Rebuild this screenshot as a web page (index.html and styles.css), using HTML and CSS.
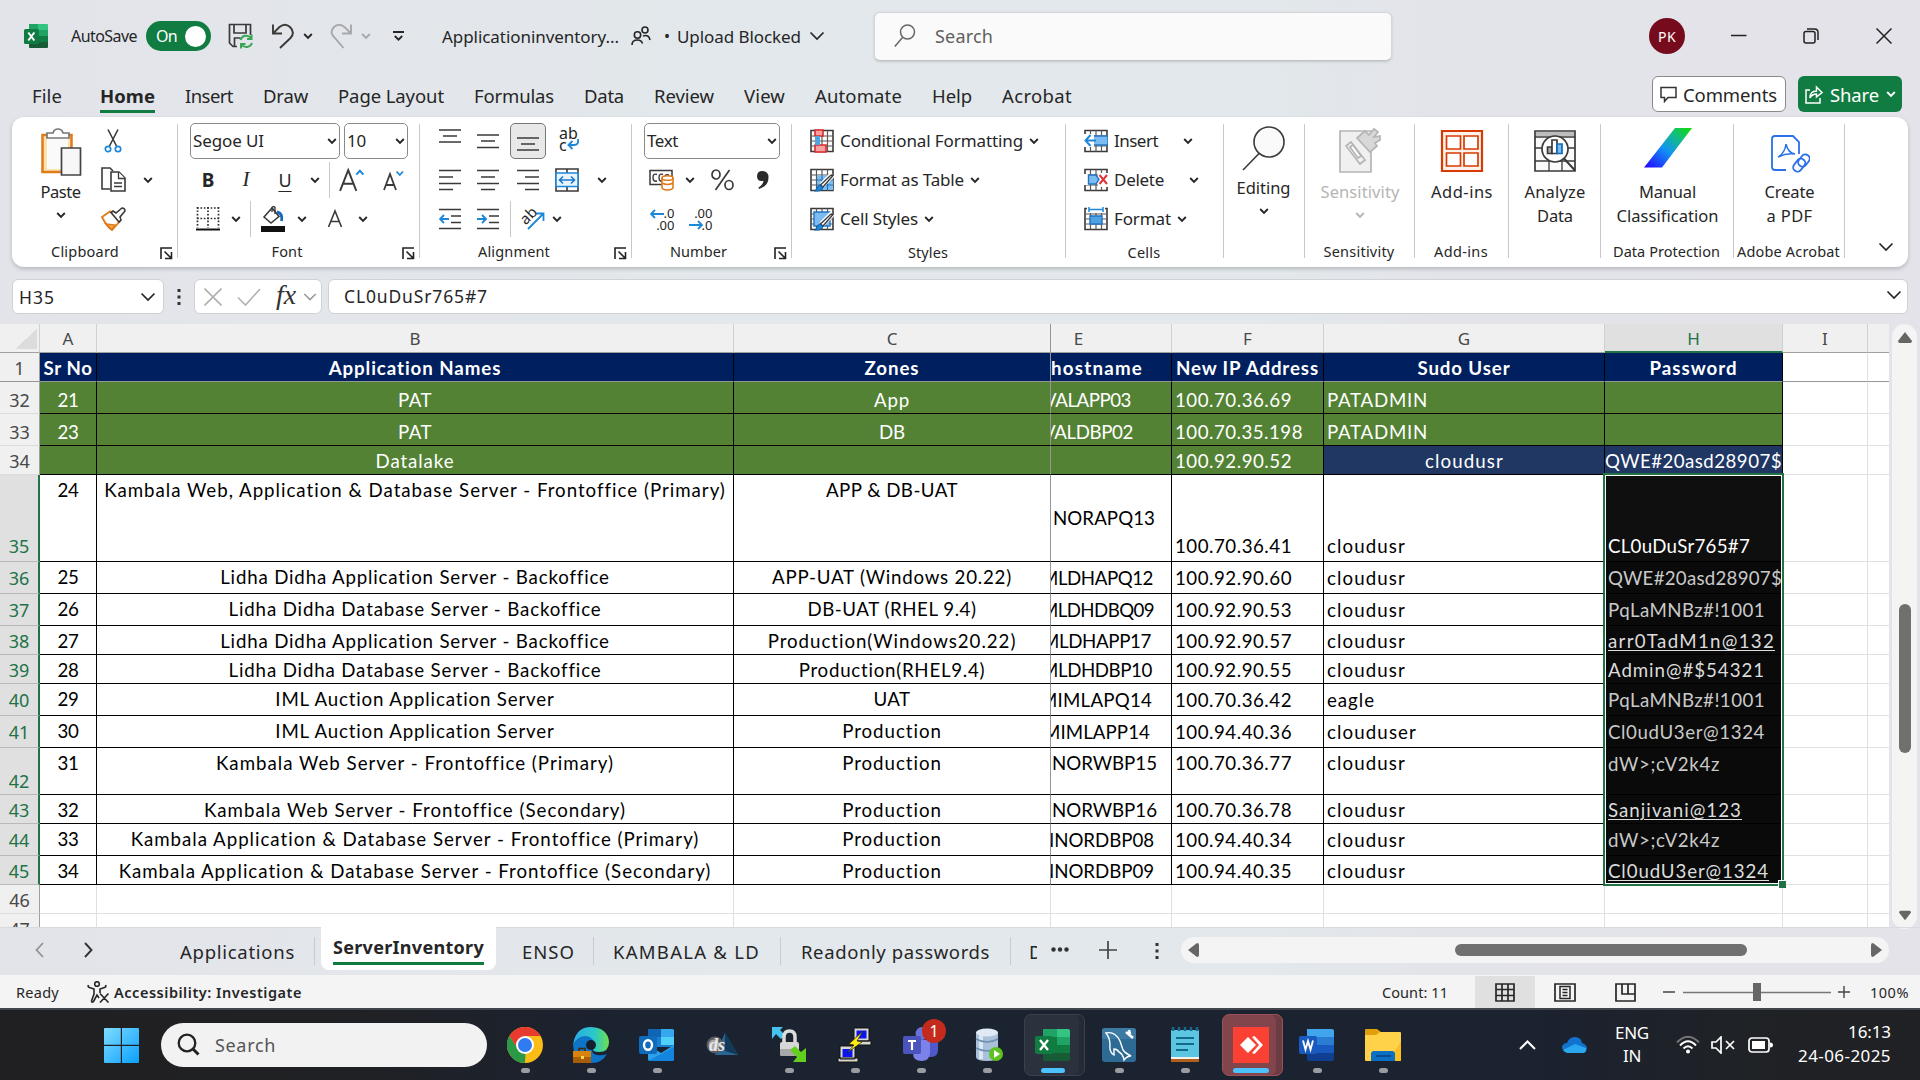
FILE: index.html
```
<!DOCTYPE html>
<html lang="en">
<head>
<meta charset="utf-8">
<title>Applicationinventory - Excel</title>
<link rel="stylesheet" href="styles.css">
</head>
<body>
<svg class="defs" aria-hidden="true">
  <defs>
    <symbol id="chev" viewBox="0 0 10 8"><path d="M1.2 2 5 5.8 8.8 2" fill="none" stroke="currentColor" stroke-width="1.9"/></symbol>
    <symbol id="chevL" viewBox="0 0 16 10"><path d="M1.5 1.5 8 8 14.500 1.500" fill="none" stroke="currentColor" stroke-width="1.7"/></symbol>
    <symbol id="launch" viewBox="0 0 13 13"><path d="M1 12V1h11M4.500 4.500 11 11M11.500 5v6.500H5" fill="none" stroke="#222" stroke-width="1.6"/></symbol>
    <symbol id="tbl" viewBox="0 0 24 24"><path d="M1 1.500h22v21H1z" fill="#fff" stroke="#3b3a39" stroke-width="1.6"/><path d="M1 7h22M1 12h22M1 17h22M6.500 1.500v21M12 1.500v21M17.500 1.500v21" stroke="#5a5958" stroke-width="1.200"/></symbol>
    <symbol id="brush" viewBox="0 0 24 24"><path d="M22.500 6.500 12 17" stroke="#fff" stroke-width="6"/><path d="M23 7.500 13 19l-2.500-2L20.500 7.500q1.500-1 2.500 0z" fill="#fff" stroke="#3b3a39" stroke-width="1.300"/><path d="M10 17.500q3 .5 2.500 3-1 3-8 2.500 2-1 2.500-3 .5-2.500 3-2.500z" fill="#1e88d8" stroke="#0f5ca8"/></symbol>
  </defs>
</svg>

<div class="app">
<header class="title">
  <svg class="xl" width="24" height="24" viewBox="0 0 24 24"><path d="M5 0h9v6H5z" fill="#21a366"/><path d="M14 0h9q1 0 1 1v5H14z" fill="#33c481"/><path d="M5 6h9v12H5z" fill="#107c41"/><path d="M14 6h10v6H14z" fill="#21a366"/><path d="M14 12h10v6H14z" fill="#107c41"/><path d="M5 18h19v5q0 1-1 1H6q-1 0-1-1z" fill="#185c37"/><rect y="5" width="15" height="15" rx="1.500" fill="#107c41"/><path d="m4.300 8.500 6 8m0-8-6 8" stroke="#fff" stroke-width="2"/></svg>
  <span class="t-auto" data-w="66">AutoSave</span>
  <span class="toggle"><span data-w="21">On</span><i></i></span>
  <svg class="t-save" width="26" height="26" viewBox="0 0 26 26"><path d="M9 23.500H5L1.500 20V1.500h21V12M6 1.500V10h12V1.500M6.500 23v-8h6" fill="none" stroke="#3b3a39" stroke-width="1.700"/><path d="M12.500 17a6 6 0 0 1 10.500-2M23.500 11.500V16H19M24 20a6 6 0 0 1-10.500 1.500M13 25.500V21h4.500" fill="none" stroke="#3aa655" stroke-width="2"/></svg>
  <svg class="t-undo" width="24" height="26" viewBox="0 0 24 26"><path d="M2 1.500V10.500h9M2.500 10 8.500 4Q14-.5 19 4q5.500 5.500.5 11L9 25" fill="none" stroke="#3b3a39" stroke-width="1.900"/></svg>
  <svg class="t-c1" width="10" height="8"><use href="#chev"/></svg>
  <svg class="t-redo" width="24" height="26" viewBox="0 0 24 26"><path d="M21 1.500V10.500h-9M20.500 10 14.500 4Q9-.5 4 4q-5 5.500 0 10l9.500 11" fill="none" stroke="#a6a8ab" stroke-width="1.900"/></svg>
  <svg class="t-c2" width="10" height="8"><use href="#chev"/></svg>
  <svg class="t-c3" width="11" height="11" viewBox="0 0 11 11"><path d="M0 1h11M1.800 5l3.700 3.700L9.200 5" fill="none" stroke="#262626" stroke-width="1.900"/></svg>
  <span class="t-name" data-w="177">Applicationinventory...</span>
  <svg class="t-ppl" width="20" height="20" viewBox="0 0 20 20" fill="none" stroke="#262626" stroke-width="1.600"><circle cx="6.500" cy="9" r="3.200"/><path d="M1 19q0-5 5.500-5 4 0 5 3.500"/><circle cx="14" cy="4" r="3"/><path d="M12 10q6-2 7 4"/></svg>
  <span class="t-dot">•</span>
  <span class="t-up" data-w="124">Upload Blocked</span>
  <svg class="t-c4" width="16" height="10"><use href="#chevL"/></svg>
  <div class="search">
    <svg width="22" height="24" viewBox="0 0 22 24" fill="none" stroke="#666" stroke-width="1.500"><circle cx="13.500" cy="8" r="7"/><path d="M8.500 13.500.8 22.500"/></svg>
    <span data-w="58">Search</span>
  </div>
  <span class="avatar"><span data-w="18">PK</span></span>
  <svg class="t-min" width="16" height="16" viewBox="0 0 16 16"><path d="M0 7.500h15.500" stroke="#222" stroke-width="1.500"/></svg>
  <svg class="t-res" width="16" height="16" viewBox="0 0 16 16" fill="none" stroke="#222" stroke-width="1.500"><rect x="1" y="3.500" width="11" height="11.500" rx="2"/><path d="M4 1h7.500q3.500 0 3.500 3.500V12"/></svg>
  <svg class="t-cls" width="16" height="16" viewBox="0 0 16 16"><path d="m.5.5 15 15m0-15-15 15" stroke="#222" stroke-width="1.500"/></svg>
</header>

<nav class="tabs">
  <span data-w="30">File</span><span class="on" data-w="55">Home</span><span data-w="48">Insert</span><span data-w="45">Draw</span><span data-w="106">Page Layout</span><span data-w="80">Formulas</span><span data-w="40">Data</span><span data-w="60">Review</span><span data-w="41">View</span><span data-w="87">Automate</span><span data-w="40">Help</span><span data-w="70">Acrobat</span>
  <button class="btn comm"><svg width="17" height="17" viewBox="0 0 17 17"><path d="M1 1.500h15v10H8L4.500 15.500V11.500H1z" fill="none" stroke="#333" stroke-width="1.500"/></svg><span data-w="94">Comments</span></button>
  <button class="btn share"><svg width="18" height="19" viewBox="0 0 18 19" fill="none" stroke="#fff" stroke-width="1.500"><path d="M5 5H1v13h14v-5"/><path d="M5 13q0-7 6.500-7V2L17 7.500 11.500 12V9Q7 9 5 13z"/></svg><span data-w="49">Share</span><svg width="10" height="8"><use href="#chev"/></svg></button>
</nav>

<section class="ribbon">
  <div class="grp g-clip">
    <div class="cols">
      <div class="big paste">
        <svg width="44" height="48" viewBox="0 0 44 48"><path d="M3.500 7h29v37h-29z" fill="#fbe3b0" stroke="#e07b1a" stroke-width="2.500"/><path d="M8 10h21v31H8z" fill="#fafafa"/><path d="M8 10V5h6q1-4 5-4t5 4h6v5z" fill="#fff" stroke="#777" stroke-width="1.700"/><path d="M22.500 20h19v27h-19z" fill="#f7f7f7" stroke="#444" stroke-width="1.700"/></svg>
        <b data-w="40">Paste</b><svg class="bc" width="10" height="8"><use href="#chev"/></svg>
      </div>
      <div class="rows">
        <div class="row"><i class="c w28"><svg width="18" height="24" viewBox="0 0 18 24"><path d="M4 .5 12.500 17M14 .5 5.500 17" stroke="#3b3a39" stroke-width="1.600"/><circle cx="4" cy="20" r="2.700" fill="none" stroke="#1e88d8" stroke-width="1.700"/><circle cx="14" cy="20" r="2.700" fill="none" stroke="#1e88d8" stroke-width="1.700"/></svg></i></div>
        <div class="row"><i class="c w28"><svg width="25" height="25" viewBox="0 0 25 25" fill="#fff" stroke="#3b3a39" stroke-width="1.600"><path d="M9 22H1V1h8l3 3"/><path d="M10 5h8l6 6v13H10z"/><path d="M17.500 5v6.500H24M13 16h8M13 19.500h8" stroke-width="1.300"/></svg></i><i class="c w42"><svg width="10" height="8"><use href="#chev"/></svg></i></div>
        <div class="row"><i class="c w28"><svg width="25" height="24" viewBox="0 0 25 24"><path d="M1 10 9 4.500 19 14l-8 9Q6 20 1 10z" fill="#fff" stroke="#e07b1a" stroke-width="1.800"/><path d="M5 17l9 1-3 4.500z" fill="#f3b14e" stroke="#e07b1a" stroke-width="1.500"/><path d="M10 5.500 12 4l3 2 6-5q3 0 3 3l-5 6 1 3-2 2z" fill="#fff" stroke="#3b3a39" stroke-width="1.600"/></svg></i></div>
      </div>
    </div>
    <footer><span data-w="68">Clipboard</span><svg width="13" height="13"><use href="#launch"/></svg></footer>
  </div>

  <div class="grp g-font">
    <div class="rows">
      <div class="row p12"><div class="combo w150"><span data-w="71">Segoe UI</span><svg width="10" height="8"><use href="#chev"/></svg></div><div class="combo w64 g4"><span data-w="19">10</span><svg width="10" height="8"><use href="#chev"/></svg></div></div>
      <div class="row p11"><i class="c w38"><strong>B</strong></i><i class="c w38"><em>I</em></i><i class="c w40"><u>U</u></i><i class="c w20"><svg width="10" height="8"><use href="#chev"/></svg></i><i class="div g4"></i>
        <i class="c w44"><svg width="26" height="26" viewBox="0 0 24 24" fill="none"><path d="M1 22 8.500 3 16 22M3.500 15.500h10" stroke="#3b3a39" stroke-width="1.800"/><path d="m16 7 3.300-3.500L22.500 7" stroke="#1e88d8" stroke-width="1.800"/></svg></i><i class="c w38"><svg width="22" height="24" viewBox="0 0 22 24" fill="none"><path d="M2 22 8 6l6 16M4 17h8" stroke="#3b3a39" stroke-width="1.800"/><path d="m14.500 3.500 3.300 3.500L21 3.500" stroke="#1e88d8" stroke-width="1.800"/></svg></i></div>
      <div class="row p12"><i class="c w36"><svg width="24" height="24" viewBox="0 0 24 24"><path d="M1 1h22M1 11.500h22" stroke="#333" stroke-width="1.700" stroke-dasharray="1.700 1.700"/><path d="M1.500 0v21M12 0v21M22.500 0v21" stroke="#333" stroke-width="1.700" stroke-dasharray="1.700 1.700"/><path d="M0 22.500h24" stroke="#111" stroke-width="2"/></svg></i><i class="c w20"><svg width="10" height="8"><use href="#chev"/></svg></i><i class="div g4"></i>
        <i class="c w44"><svg width="26" height="26" viewBox="0 0 26 26"><path d="m4 11 8-9 7 8.500L11 17z" fill="#fff" stroke="#3b3a39" stroke-width="1.600"/><path d="M12 6V1.500q2-2 3 0V8" fill="none" stroke="#3b3a39" stroke-width="1.400"/><path d="M17 6q6 1 4.500 9" fill="none" stroke="#1668b8" stroke-width="2.800"/><path d="M1 20h24v6H1z" fill="#111"/></svg></i><i class="c w14"><svg width="10" height="8"><use href="#chev"/></svg></i><i class="c w52"><svg width="16" height="20" viewBox="0 0 16 18"><path d="M1.500 17 8 1l6.500 16M4 11.500h8" fill="none" stroke="#3b3a39" stroke-width="1.600"/></svg></i><i class="c w4"><svg width="10" height="8"><use href="#chev"/></svg></i></div>
    </div>
    <footer><span data-w="31">Font</span><svg width="13" height="13"><use href="#launch"/></svg></footer>
  </div>

  <div class="grp g-align">
    <div class="rows">
      <div class="row p11"><i class="c w38"><svg class="ln up" width="22" height="22" viewBox="0 0 22 22"><path d="M0 3h22M4 9h14M0 15h22"/></svg></i><i class="c w38"><svg class="ln" width="22" height="22" viewBox="0 0 22 22"><path d="M0 5h22M4 11h14M0 17.500h22"/></svg></i><i class="c w36 g3 pressed"><svg class="ln" width="22" height="22" viewBox="0 0 22 22"><path d="M0 8h22M4 14h14M0 20h22"/></svg></i><i class="c w46 wrap"><span>ab<br>c</span><svg width="12" height="12" viewBox="0 0 12 12"><path d="M11 0q1 6-4 6H1.500M5.500 2 1.500 6l4 4" fill="none" stroke="#1e88d8" stroke-width="1.900"/></svg></i></div>
      <div class="row p11"><i class="c w38"><svg class="ln" width="22" height="22" viewBox="0 0 22 22"><path d="M0 1.500h22M0 8h14M0 14.500h22M0 20.500h14"/></svg></i><i class="c w38"><svg class="ln" width="22" height="22" viewBox="0 0 22 22"><path d="M0 1.500h22M4 8h14M0 14.500h22M4 20.500h14"/></svg></i><i class="c w36 g3"><svg class="ln" width="22" height="22" viewBox="0 0 22 22"><path d="M0 1.500h22M8 8h14M0 14.500h22M8 20.500h14"/></svg></i><i class="c w42"><svg width="24" height="24" viewBox="0 0 24 24" fill="none"><path d="M1 1h22v22H1zM12 1v4m0 14v4" stroke="#3b3a39" stroke-width="1.600"/><path d="M1 5h22v13.500H1z" fill="#eaf4fc" stroke="#1e88d8" stroke-width="1.600"/><path d="M4.500 12h15M8 8.500 4.500 12 8 15.500m8-7 3.500 3.500-3.500 3.500" stroke="#1e78c8" stroke-width="1.600"/></svg></i><i class="c w28"><svg width="10" height="8"><use href="#chev"/></svg></i></div>
      <div class="row p11"><i class="c w38"><svg class="ln" width="22" height="22" viewBox="0 0 22 22"><path d="M0 1.500h22M12 8h10M12 14.500h10M0 20.500h22"/><path class="bl" d="M1 11h9M5 7l-4 4 4 4"/></svg></i><i class="c w38"><svg class="ln" width="22" height="22" viewBox="0 0 22 22"><path d="M0 1.500h22M12 8h10M12 14.500h10M0 20.500h22"/><path class="bl" d="M0 11h9M5 7l4 4-4 4"/></svg></i><i class="div g3"></i><i class="c w42"><span class="ori">ab</span><svg class="orr" width="18" height="18" viewBox="0 0 18 18"><path d="M1 17 16 2M9 1.500h7.500V9" fill="none" stroke="#1e88d8" stroke-width="1.800"/></svg></i><i class="c w8"><svg width="10" height="8"><use href="#chev"/></svg></i></div>
    </div>
    <footer><span data-w="72">Alignment</span><svg width="13" height="13"><use href="#launch"/></svg></footer>
  </div>

  <div class="grp g-num">
    <div class="rows">
      <div class="row p12"><div class="combo w136"><span data-w="31">Text</span><svg width="10" height="8"><use href="#chev"/></svg></div></div>
      <div class="row p12"><i class="c w36"><svg width="26" height="22" viewBox="0 0 26 22"><path d="M1 1.500h22v14H1z" fill="none" stroke="#3b3a39" stroke-width="1.500"/><path d="M8 5.500Q4 4 4 8.500T8 12M14 5.500q-4-1.500-4 3T14 12M16 12V8q0-3 4-2" fill="none" stroke="#3b3a39" stroke-width="1.400"/><path d="M13 9h11v9q0 3-5.500 3T13 18z" fill="#fff" stroke="#e07b1a" stroke-width="1.600"/><ellipse cx="18.500" cy="9" rx="5.500" ry="2.300" fill="#fff" stroke="#e07b1a" stroke-width="1.600"/><path d="M13 14q5.500 3 11 0" fill="none" stroke="#e07b1a" stroke-width="1.600"/></svg></i><i class="c w20"><svg width="10" height="8"><use href="#chev"/></svg></i><i class="c w44"><svg width="23" height="22" viewBox="0 0 23 22" fill="none" stroke="#3b3a39" stroke-width="1.700"><ellipse cx="5" cy="5.500" rx="4" ry="4.500"/><ellipse cx="18" cy="16" rx="4" ry="4.500"/><path d="M18.500 1 4.500 21"/></svg></i><i class="c w38"><svg width="12" height="18" viewBox="0 0 12 18"><path d="M5.500 0Q11.500 0 11.500 6.500 11.500 15 2 18l-.5-1.500Q6 14 6.500 9.800 0 11 0 5.200 0 0 5.500 0z" fill="#2b2b2b"/></svg></i></div>
      <div class="row p12"><i class="c w36 dec"><span>&nbsp;&nbsp;.0<br>.00</span><svg class="dl" width="14" height="10" viewBox="0 0 14 10"><path d="M14 5H1M5 1 1 5l4 4"/></svg></i><i class="c w36 g2 dec"><span>.00<br>&nbsp;&nbsp;.0</span><svg class="dr" width="14" height="10" viewBox="0 0 14 10"><path d="M0 5h13M9 1l4 4-4 4"/></svg></i></div>
    </div>
    <footer><span data-w="57">Number</span><svg width="13" height="13"><use href="#launch"/></svg></footer>
  </div>

  <div class="grp g-sty">
    <div class="rows">
      <div class="row p18"><svg width="24" height="24" viewBox="0 0 24 24"><use href="#tbl"/><path d="M5 1h8v6H5zM5 16h11v7H5z" fill="#f9a0a0" stroke="#d92a2a" stroke-width="1.600"/><path d="M5 7h5v9H5z" fill="#4fa3e3"/></svg><span class="lb" data-w="183">Conditional Formatting</span><svg class="g6" width="10" height="8"><use href="#chev"/></svg></div>
      <div class="row p18"><svg width="24" height="24" viewBox="0 0 24 24"><use href="#tbl"/><path d="M7 7.500h16V22H7z" fill="#7cbcf0"/><path d="M7 12h16M7 17h16M12 7.500V22M17.500 7.500V22" stroke="#2474c0" stroke-width="1.200"/><use href="#brush"/></svg><span class="lb" data-w="124">Format as Table</span><svg class="g6" width="10" height="8"><use href="#chev"/></svg></div>
      <div class="row p18"><svg width="24" height="24" viewBox="0 0 24 24"><use href="#tbl"/><path d="M4 5h16v14H4z" fill="#7cbcf0" stroke="#2474c0" stroke-width="1.400"/><use href="#brush"/></svg><span class="lb" data-w="78">Cell Styles</span><svg class="g6" width="10" height="8"><use href="#chev"/></svg></div>
    </div>
    <footer class="lo"><span data-w="40">Styles</span></footer>
  </div>

  <div class="grp g-cells">
    <div class="rows">
      <div class="row p18"><svg width="24" height="24" viewBox="0 0 24 24"><use href="#tbl"/><path d="M8 7h16v9H8z" fill="#7cbcf0" stroke="#2474c0" stroke-width="1.400"/><path d="M0 5h10v13H0z" fill="#fff"/><path d="M12 11.500H1.500M6.500 6l-5 5.500 5 5.500" fill="none" stroke="#1e88d8" stroke-width="2"/></svg><span class="lb" data-w="44">Insert</span><svg class="g25" width="10" height="8"><use href="#chev"/></svg></div>
      <div class="row p18"><svg width="24" height="24" viewBox="0 0 24 24"><use href="#tbl"/><path d="M0 6h5v11H0zM14 5h10v14H14z" fill="#fff"/><path d="M4.500 7H12l3 4.500-3 4.500H4.500z" fill="#7cbcf0" stroke="#2474c0" stroke-width="1.400"/><path d="m15.500 7 7.500 9m0-9-7.500 9" stroke="#e03535" stroke-width="2"/></svg><span class="lb" data-w="50">Delete</span><svg class="g25" width="10" height="8"><use href="#chev"/></svg></div>
      <div class="row p18"><svg width="24" height="24" viewBox="0 0 24 24"><use href="#tbl"/><path d="M3 0h18v6H3z" fill="#fff"/><path d="M6 9h12v8H6z" fill="#4fa3e3" stroke="#2474c0" stroke-width="1.400"/><path d="M5 2.500h14M5 0v5M19 0v5" stroke="#1e88d8" stroke-width="1.500"/></svg><span class="lb" data-w="57">Format</span><svg class="g6" width="10" height="8"><use href="#chev"/></svg></div>
    </div>
    <footer class="lo"><span data-w="33">Cells</span></footer>
  </div>

  <div class="grp g-edit"><div class="big"><svg width="44" height="46" viewBox="0 0 44 46" fill="none" stroke="#3b3a39" stroke-width="1.600"><circle cx="27" cy="16" r="15" fill="#fafafa"/><path d="M17 27.500 1 44"/></svg><b data-w="54">Editing</b><svg class="bc" width="10" height="8"><use href="#chev"/></svg></div></div>
  <div class="grp g-sens"><div class="big dim"><svg width="44" height="46" viewBox="0 0 44 46" fill="#f0f0f0" stroke="#b5b5b5" stroke-width="1.700"><path d="M2 4h31v41H2z"/><path d="M8 19l5-4 14 18-5 4z" /><path d="m12 20 3-2 8 11-3 2z" fill="#fff"/><path d="M19 11 27 4l4 4 5-6 4 3-4 5 6-1v4l-5 3 2 3-7 6z" fill="#d8d8d8"/></svg><b data-w="79">Sensitivity</b><svg class="bc" width="10" height="8"><use href="#chev"/></svg></div><footer class="lo"><span data-w="71">Sensitivity</span></footer></div>
  <div class="grp g-add"><div class="big"><svg width="44" height="46" viewBox="0 0 44 46" fill="none" stroke="#d83b01"><path d="M2 4h40v40H2z" stroke-width="2.200" fill="#fdf1ec"/><path d="M6.500 9h14v13h-14zM24 9h14v13H24zM6.500 26h14v13h-14zM24 26h14v13H24z" stroke-width="1.700" fill="#fff"/></svg><b data-w="62">Add-ins</b></div><footer class="lo"><span data-w="54">Add-ins</span></footer></div>
  <div class="grp g-ana"><div class="big"><svg width="44" height="46" viewBox="0 0 44 46" fill="none" stroke="#3b3a39" stroke-width="1.700"><path d="M2 4h40v40H2z" fill="#fafafa"/><path d="M3 5h38v4H3z" fill="#bdbdbd" stroke="none"/><path d="M2 10h40M2 21h40M2 34h40M16 34v10M29 34v10" stroke-width="1.300"/><circle cx="22" cy="22" r="13" fill="#fff"/><path d="M14.500 20h4.500v6.500h-4.500z" fill="#aaa"/><path d="M19 13h5v13.500h-5z" fill="#fff"/><path d="M24 17h5v9.500h-5z" fill="#7cbcf0" stroke="#1668b8"/><path d="m31 31.500 11 12" stroke-width="2"/></svg><b data-w="61">Analyze</b><b data-w="36">Data</b></div></div>
  <div class="grp g-man"><div class="big"><svg width="48" height="46" viewBox="0 0 48 46"><defs><linearGradient id="lg" x1="0" y1="1" x2="1" y2="0"><stop offset="0" stop-color="#2400ff"/><stop offset=".45" stop-color="#1293f5"/><stop offset=".75" stop-color="#12bf7a"/><stop offset="1" stop-color="#12dc00"/></linearGradient></defs><path d="M0 40.500h18L48 1H31z" fill="url(#lg)"/></svg><b data-w="57">Manual</b><b data-w="102">Classification</b></div><footer class="lo"><span data-w="107">Data Protection</span></footer></div>
  <div class="grp g-pdf"><div class="big"><svg width="40" height="46" viewBox="0 -2 40 46" fill="none" stroke="#2a70e8" stroke-width="1.800"><path d="M16 41H5q-3 0-3-3V10q0-3 3-3h18l6 6v12"/><path d="M8 28q7-4 8-13M16 15q2 9 9 10-9-1-17 3" stroke-width="1.500"/><rect x="25" y="29" width="8.500" height="14" rx="4" transform="rotate(38 29 36)"/><rect x="30" y="25" width="8.500" height="13" rx="4" transform="rotate(38 34 31)" /></svg><b data-w="50">Create</b><b data-w="46">a PDF</b></div><footer class="lo"><span data-w="103">Adobe Acrobat</span></footer></div>
  <div class="g-end"><svg width="16" height="10"><use href="#chevL"/></svg></div>
</section>

<div class="fbar">
  <div class="fb name"><span data-w="36">H35</span><svg width="16" height="10"><use href="#chevL"/></svg></div>
  <svg class="dots" width="4" height="16" viewBox="0 0 4 16" fill="#333"><path d="M.5 0h3v3h-3zM.5 6.500h3v3h-3zM.5 13h3v3h-3z"/></svg>
  <div class="fb fx"><svg width="18" height="18" viewBox="0 0 18 18"><path d="m.5.5 17 17m0-17-17 17" stroke="#b0b0b0" stroke-width="1.600"/></svg><svg width="24" height="18" viewBox="0 0 24 18"><path d="M1 9.500 8.500 17 23 1" fill="none" stroke="#b0b0b0" stroke-width="1.600"/></svg><em>fx</em><svg class="gr" width="14" height="10" viewBox="0 0 16 10"><use href="#chevL"/></svg></div>
  <div class="fb val"><span data-w="144">CL0uDuSr765#7</span><svg width="16" height="10"><use href="#chevL"/></svg></div>
</div>

<main class="sheet">
  <div class="grid" id="grid"></div>
  <div class="vs"><svg width="14" height="11" viewBox="0 0 14 11"><path d="M7 0 14 9q0 2-2 2H2q-2 0-2-2z"/></svg><i></i><svg width="12" height="11" viewBox="0 0 14 11"><path d="M7 11 0 2Q0 0 2 0h10q2 0 2 2z"/></svg></div>
</main>

<div class="sheets">
  <svg class="s-l" width="9" height="16" viewBox="0 0 9 16"><path d="M8 1 1.500 8 8 15" fill="none" stroke="#909090" stroke-width="1.700"/></svg>
  <svg class="s-r" width="9" height="16" viewBox="0 0 9 16"><path d="m1 1 6.500 7L1 15" fill="none" stroke="#333" stroke-width="1.900"/></svg>
  <span class="s1"><b data-w="115">Applications</b></span><span class="s2"><b data-w="151">ServerInventory</b></span><span class="s3"><b data-w="53">ENSO</b></span><span class="s4"><b data-w="147">KAMBALA &amp; LD</b></span><span class="s5"><b data-w="189">Readonly passwords</b></span><span class="s6"><b>D</b></span>
  <svg class="s-m" width="18" height="5" viewBox="0 0 18 5" fill="#333"><circle cx="2.500" cy="2.500" r="2.200"/><circle cx="9" cy="2.500" r="2.200"/><circle cx="15.500" cy="2.500" r="2.200"/></svg>
  <svg class="s-p" width="18" height="18" viewBox="0 0 18 18"><path d="M9 0v18M0 9h18" stroke="#444" stroke-width="1.700"/></svg>
  <svg class="s-d" width="4" height="16" viewBox="0 0 4 16" fill="#333"><path d="M.5 0h3v3h-3zM.5 6.500h3v3h-3zM.5 13h3v3h-3z"/></svg>
  <div class="hs"><svg width="11" height="14" viewBox="0 0 11 14"><path d="M0 7 9 0q2 0 2 2v10q0 2-2 2z"/></svg><i></i><svg width="11" height="14" viewBox="0 0 11 14"><path d="M11 7 2 0Q0 0 0 2v10q0 2 2 2z"/></svg></div>
</div>

<div class="status">
  <span class="st1" data-w="43">Ready</span>
  <svg class="st2" width="23" height="22" viewBox="0 0 23 22" fill="none" stroke="#262626" stroke-width="1.600"><circle cx="10" cy="3" r="2.300"/><path d="M1.500 4q-1 2 1 2.500L7 8v5L4.500 20q.5 2 2 .5L10 14l2 3M18.500 4q1 2-1 2.500L13 8v4M13 12.500l8.500 9m0-9-8.500 9"/></svg>
  <span class="st3" data-w="188">Accessibility: Investigate</span>
  <span class="st4" data-w="66">Count: 11</span>
  <i class="v on"><svg width="20" height="19" viewBox="0 0 20 19" fill="none" stroke="#262626" stroke-width="1.700"><path d="M1 1h18v17H1zM1 6.500h18M1 12.500h18M7 1v17M13 1v17"/></svg></i>
  <i class="v"><svg width="22" height="19" viewBox="0 0 22 19" fill="none" stroke="#262626" stroke-width="1.700"><path d="M1 1h20v17H1z"/><path d="M6 3.500h10v12H6zM8.500 6.500h5M8.500 9.500h5M8.500 12.500h5" stroke-width="1.500"/></svg></i>
  <i class="v"><svg width="21" height="19" viewBox="0 0 21 19" fill="none" stroke="#262626" stroke-width="1.700"><path d="M1 1h19v17H1zM7 1v10h6V1M13 11h7"/></svg></i>
  <div class="zoom"><svg width="187" height="18" viewBox="0 0 187 18" fill="none" stroke="#444"><path d="M0 9h12M175 9h12M181 3v12" stroke-width="1.400"/><path d="M20 9.500h148" stroke="#777"  stroke-width="1.500"/><path d="M94 0v18" stroke="#666" stroke-width="8"/></svg></div>
  <span class="st5" data-w="39">100%</span>
</div>

<footer class="task">
  <svg class="win" width="35" height="35" viewBox="0 0 35 35"><defs><linearGradient id="w" x1="0" y1="0" x2="1" y2="1"><stop offset="0" stop-color="#7fdcff"/><stop offset="1" stop-color="#0aa0ff"/></linearGradient></defs><path d="M1 0h15.800v16.800H0V1q0-1 1-1zM18 0h16q1 0 1 1v15.800H18zM0 18h16.800v17H1q-1 0-1-1zM18 18h17v16q0 1-1 1H18z" fill="url(#w)"/></svg>
  <div class="ts"><svg width="23" height="23" viewBox="0 0 23 23" fill="none" stroke="#222" stroke-width="2.300"><circle cx="10" cy="10" r="8.300"/><path d="m16 16 5.500 5.500" stroke-width="3"/></svg><span data-w="61">Search</span></div>
  <div class="apps">
    <span><svg viewBox="0 0 36 36"><circle cx="18" cy="18" r="18" fill="#fbbc15"/><path d="M2.400 9A18 18 0 0 1 33.600 9H18L10 21z" fill="#e63b2e"/><path d="M2.400 9 11 22l7.500 5-.5 9A18 18 0 0 1 2.400 9z" fill="#2b9a47"/><circle cx="18" cy="18" r="9" fill="#fff"/><circle cx="18" cy="18" r="7" fill="#2f7bf0"/></svg></span>
    <span><svg viewBox="0 0 36 36"><defs><linearGradient id="e1" x1="0" x2="1"><stop offset="0" stop-color="#2ba9e8"/><stop offset=".6" stop-color="#2cc8c8"/><stop offset="1" stop-color="#6ee04e"/></linearGradient></defs><path d="M1 13Q5 0 18 0q17 1 18 15 0 10-10 10-8 0-6-5 1-10-9-9Q4 11 0 18z" fill="url(#e1)"/><path d="M0 18Q4 9 13 9q8 1 8 9-5 8 3 10 5 1 10-1-5 9-15 9Q1 35 0 18z" fill="#0e74c8"/><circle cx="18" cy="18" r="5" fill="#14202c"/><path d="M0 24h18v12H0z" fill="#d9820c"/><path d="M0 30h18v6H0z" fill="#a85e06"/><path d="M6 24v-2.500h6V24" fill="none" stroke="#412604" stroke-width="1.500"/><path d="M8 29h3v3H8z" fill="#fbd25a"/></svg></span>
    <span><svg viewBox="0 0 36 36"><path d="M9 2h24q2 0 2 2v16H9z" fill="#1b7fd4"/><path d="M9 2h13v8H9z" fill="#1066b5"/><path d="M22 2h11q2 0 2 2v6H22z" fill="#35a8ee"/><path d="M22 10h13v8H22z" fill="#50d0f8"/><path d="M9 18l13 8 13-8v14q0 2-2 2H11q-2 0-2-2z" fill="#2ca0ea"/><path d="M9 34 35 20v12q0 2-2 2z" fill="#1485de"/><rect x="0" y="9" width="18" height="18" rx="2" fill="#0f6cbd"/><ellipse cx="9" cy="18" rx="4" ry="4.800" fill="none" stroke="#fff" stroke-width="2.400"/></svg></span>
    <span class="nodot"><svg viewBox="0 0 36 36"><path d="M20 6 33 28H10z" fill="#2a6596"/><path d="M20 6 33 28 20 24z" fill="#123a58"/><circle cx="10" cy="18" r="8.500" fill="#5c5c5e"/><circle cx="9" cy="18" r="5.500" fill="#a8a8a8"/><text x="4" y="24" font-family="Liberation Serif, serif" font-style="italic" font-weight="700" font-size="18" fill="#e8e8e8">ds</text></svg></span>
    <span><svg viewBox="0 0 36 36"><path d="M1 0h11L9 3l5 5-4 4-5-5-4 5z" fill="#45c3ee"/><path d="M13 17v-7q0-6 5.500-6T24 10v7" fill="none" stroke="#dcdcdc" stroke-width="3.500"/><rect x="9" y="15" width="19" height="14" rx="2" fill="#d6d6d6"/><path d="M9 22h19v5q0 2-2 2H11q-2 0-2-2z" fill="#a8a8a8"/><path d="M19 23l5-4 6 6 5-4v14H22l4-5z" fill="#62cf1e"/></svg></span>
    <span><svg viewBox="0 0 36 36"><g fill="#d8d8d0" stroke="#111"><path d="M17 1h15v13H17zM15 14h19v4H15zM3 19h15v13H3zM1 31h20v4H1z"/></g><path d="M19.500 3.500h10v8h-10zM5.500 22h10v8h-10z" fill="#0a14f0"/><path d="M26 4 12 17l5 1-7 8 15-11-5-1z" fill="#ffee10" stroke="#222" stroke-width=".7"/></svg></span>
    <span><svg viewBox="0 0 36 36"><circle cx="19" cy="6.500" r="6.500" fill="#6a72d8"/><path d="M25 13h10v10q0 7-7 7h-3z" fill="#5059c9"/><path d="M10 13h17v12q0 9-8.500 9T10 26z" fill="#7b83eb"/><rect y="9" width="18" height="18" rx="2" fill="#4b53bc"/><path d="M5 14h8M9 14v9" stroke="#fff" stroke-width="2.200"/></svg><em class="badge">1</em></span>
    <span><svg viewBox="0 0 36 36"><path d="M7 5v25q0 4 11 4t11-4V5z" fill="#a9c1da"/><path d="M10 8v24h4V9z" fill="#dbe7f2"/><path d="M7 12q11 6 22 0M7 21q11 6 22 0" fill="none" stroke="#6f8fb0" stroke-width="1.500"/><ellipse cx="18" cy="5.500" rx="11" ry="4" fill="#dfeaf4"/><circle cx="27" cy="27" r="7" fill="#5cc21e"/><path d="m25 23 6 4-6 4z" fill="#fff"/></svg></span>
    <span class="act"><svg viewBox="0 0 36 36"><path d="M8 2h14v8H8z" fill="#21a366"/><path d="M22 2h11q2 0 2 2v6H22z" fill="#33c481"/><path d="M8 10h14v16H8z" fill="#107c41"/><path d="M22 10h13v8H22z" fill="#21a366"/><path d="M22 18h13v8H22z" fill="#107c41"/><path d="M8 26h27v6q0 2-2 2H10q-2 0-2-2z" fill="#185c37"/><rect y="9" width="18" height="18" rx="2" fill="#107c41"/><path d="m5 13 8 10m0-10L5 23" stroke="#fff" stroke-width="2.300"/></svg></span>
    <span><svg viewBox="0 0 36 36"><rect x="1" y="1" width="34" height="34" rx="3" fill="#2e6b94"/><path d="M1 4q0-3 3-3h28q3 0 3 3v8H1z" fill="#3d7ba5"/><path d="M5 6q9-2 14 8 2 6 3 9 2 3 8 6-4 0-7 4-1-6-5-8-2-3-5-3v6q-5-3-4-10Q9 11 5 6z" fill="none" stroke="#fff" stroke-width="1.400"/><path d="m25 5 7 6m-4-8 1 4" stroke="#fff" stroke-width="2.500"/></svg></span>
    <span><svg viewBox="0 0 36 36"><path d="M4 3h28v28H4z" fill="#5cc6e2"/><path d="M4 30h28v2H4z" fill="#f2f2f2"/><path d="M4 32h28v3H4z" fill="#b0601a"/><path d="M6 0v4M12 0v4M18 0v4M24 0v4M30 0v4" stroke="#176a8c" stroke-width="2.500"/><path d="M9 11h18M9 17h18M9 23h12" stroke="#116a88" stroke-width="2"/></svg></span>
    <span class="any"><svg viewBox="0 0 36 36"><path d="M0 0h36v36H0z" fill="#fb4133"/><path d="m7 18 8-8 8 8-8 8zM19 10l2.500-1 8.500 9-8.500 9-2.500-1 7-8z" fill="#fff"/></svg></span>
    <span><svg viewBox="0 0 36 36"><path d="M8 2h25q2 0 2 2v6H8z" fill="#41a5ee"/><path d="M8 10h27v8H8z" fill="#2b7cd3"/><path d="M8 18h27v8H8z" fill="#185abd"/><path d="M8 26h27v6q0 2-2 2H10q-2 0-2-2z" fill="#103f91"/><rect y="9" width="18" height="18" rx="2" fill="#185abd"/><path d="m4 13.500 2.500 9L9 14l2.500 8.500 2.500-9" fill="none" stroke="#fff" stroke-width="1.900"/></svg></span>
    <span><svg viewBox="0 0 36 36"><path d="M0 3q0-1 1-1h11l4 3-4 5H0z" fill="#e0a00c"/><path d="M0 8h11l4-3h20q1 0 1 1v27q0 1-1 1H1q-1 0-1-1z" fill="#ffd24a"/><path d="M24 34 36 14v19q0 1-1 1z" fill="#fbbf20"/><path d="M6 34V27q0-3 3-3h18q3 0 3 3v7z" fill="#0b6fc4"/><path d="M11 29h15" stroke="#0a4a86" stroke-width="1.800"/></svg></span>
  </div>
  <svg class="tr1" width="17" height="10" viewBox="0 0 17 10"><path d="m1 9 7.500-7.500L16 9" fill="none" stroke="#fff" stroke-width="2"/></svg>
  <svg class="tr2" width="25" height="16" viewBox="0 0 25 16"><path d="M5 15q-5-1-5-5 1-4 5-4 2-6 8-6 6 0 7 6 4 1 5 5-1 5-4 5z" fill="#1273cf"/><path d="M1 13 13 7l11 4q1 5-4 5H5q-3-1-4-3z" fill="#2ba7ef"/></svg>
  <div class="lang"><span data-w="34">ENG</span><span data-w="18">IN</span></div>
  <svg class="tr3" width="24" height="18" viewBox="0 0 24 18" fill="none" stroke="#fff" stroke-width="1.900"><path d="M1 6.500Q12-5 23 6.500" stroke="#777"/><path d="M4 9.500Q12 1 20 9.500M7.500 12.500Q12 8 16.500 12.500"/><circle cx="12" cy="15.500" r="2" fill="#fff" stroke="none"/></svg>
  <svg class="tr4" width="24" height="18" viewBox="0 0 24 18" fill="none" stroke="#fff" stroke-width="1.700"><path d="M1 6h4l5-5v16l-5-5H1zM15 5l8 8m0-8-8 8"/></svg>
  <svg class="tr5" width="25" height="16" viewBox="0 0 25 16"><rect x="1" y="1" width="20" height="14" rx="3" fill="none" stroke="#fff" stroke-width="1.700"/><path d="M4 4h13v8H4zM22 5.500q3 0 3 2.500t-3 2.500z" fill="#fff"/></svg>
  <div class="clock"><span data-w="43">16:13</span><span data-w="93">24-06-2025</span></div>
</footer>
</div>
<script src="app.js"></script>
</body>
</html>
```
FILE: styles.css
```
*{box-sizing:border-box}
body{margin:0;width:1920px;height:1080px;overflow:hidden;font-family:"Noto Sans","Open Sans",sans-serif;color:#262626}
.defs{position:absolute;width:0;height:0}
svg{flex:none;display:block}
[data-w]{white-space:nowrap}
i,b{font-style:normal;font-weight:400}
.app{height:1080px;display:flex;flex-direction:column;background:linear-gradient(90deg,#e2e4ea 0,#e3e6eb 20%,#e2e8eb 38%,#e2e8eb 66%,#e3e4ea 75%,#e3e3e9 100%)}

.title{height:73px;display:flex;align-items:center;font-size:17px;padding:0 0 1px 24px}
.t-auto{margin-left:23px;font-size:16px}
.toggle{margin-left:9px;width:65px;height:30px;border-radius:15px;background:#107c41;color:#fff;display:flex;align-items:center;padding:0 5px 0 10px;justify-content:space-between;font-size:16px}
.toggle i{width:21px;height:21px;border-radius:50%;background:#fff}
.t-save{margin-left:17px}.t-undo{margin-left:17px}.t-c1{margin-left:8px}.t-redo{margin-left:17px}
.t-c2{margin-left:7px;color:#a6a8ab}.t-c3{margin-left:22px}.t-name{margin-left:38px}.t-ppl{margin-left:12px}
.t-dot{margin-left:13px;width:7px;font-size:16px}.t-up{margin-left:6px}.t-c4{margin-left:8px}
.search{margin-left:49px;width:518px;height:49px;background:#fafafa;border:1px solid #d4d6d9;border-bottom-color:#bfc1c4;border-radius:6px;box-shadow:0 1px 3px #0002;display:flex;align-items:center;padding-left:19px;gap:19px;font-size:18px;color:#5f5f5f}
.avatar{margin-left:257px;width:36px;height:36px;border-radius:50%;background:#750b1c;color:#fff;font-size:14px;display:flex;align-items:center;justify-content:center}
.t-min{margin-left:46px}.t-res{margin-left:56px}.t-cls{margin-left:57px}

.tabs{height:44px;display:flex;align-items:flex-start;padding:8px 0 0 32px;font-size:18.500px;line-height:30px}
.tabs>span{margin-right:30px}
.tabs>span:first-child{margin-right:38px}
.tabs .on{font-weight:700;line-height:28px;margin-top:1px;box-shadow:0 3px 0 #107c41;margin-right:30px}
.btn{height:36px;margin-top:-5px;border-radius:6px;display:flex;align-items:center;font:18.500px "Noto Sans",sans-serif;color:#262626;padding:0 0 0 7px}
.comm{width:134px;background:#fff;border:1px solid #8a8a8a;gap:6px;margin-left:auto}
.share{width:104px;background:#107c41;border:0;color:#fff;margin:-5px 18px 0 12px;gap:7px}

.ribbon{margin-left:12px;width:1896px;height:150px;background:#fff;border-radius:12px;display:flex;box-shadow:0 2px 4px #0003;flex:none;color:#262626}
.grp{position:relative;height:150px;flex:none;display:flex;flex-direction:column;padding-top:4px}
.grp::after{content:"";position:absolute;right:0;top:7px;width:1px;height:134px;background:#c8c8c8}
.grp footer{margin-top:auto;height:30px;display:flex;align-items:center;justify-content:center;font-size:14.500px;line-height:26px;position:relative;padding-bottom:4px}
.grp footer.lo{padding-bottom:2px;padding-right:2px}
.grp footer svg{position:absolute;right:5px;top:9px}
.g-clip{width:166px}.g-font{width:242px}.g-align{width:212px}.g-num{width:160px}.g-sty{width:274px}.g-cells{width:158px}.g-edit{width:81px}.g-sens{width:110px}.g-add{width:94px}.g-ana{width:92px}.g-man{width:133px}.g-pdf{width:111px}
.g-clip footer{padding-right:20px}.g-font footer,.g-align footer{padding-right:24px}
.g-num footer{padding-right:27px}
.cols{display:flex}
.rows{display:flex;flex-direction:column}
.row{height:39px;display:flex;align-items:center;font-size:17px}
.p11{padding-left:11px}.p12{padding-left:12px}.p18{padding-left:18px}
.c{display:flex;align-items:center;justify-content:center;flex:none}
.w4{width:4px}.w8{width:8px}.w14{width:14px}.w20{width:20px}.w28{width:28px}.w36{width:36px}.w38{width:38px}.w40{width:40px}.w42{width:42px}.w44{width:44px}.w46{width:46px}.w52{width:52px}.w64{width:64px}.w136{width:136px}.w150{width:150px}
.g2{margin-left:2px}.g3{margin-left:3px}.g4{margin-left:4px}.g6{margin-left:6px}.g25{margin-left:25px}
.div{width:1px;height:36px;background:#c8c8c8;flex:none}
.combo{height:36px;border:1px solid #8a8a8a;border-radius:5px;display:flex;align-items:center;justify-content:space-between;padding:0 2px;font-size:17px}
.row strong{font-size:19px}.row em{font:italic 21px "Liberation Serif",serif}.row u{font-size:18px;text-underline-offset:4px}
.pressed{height:36px;background:#e8e8e8;border:1px solid #777;border-radius:5px}
.ln{fill:none;stroke:#3b3a39;stroke-width:1.700}.ln .bl{stroke:#1e88d8;stroke-width:1.900}
.up{margin-bottom:6px}
.wrap{align-items:center}.wrap span{font-size:16px;line-height:12px;margin-bottom:3px}.wrap svg{margin:9px 0 0 -11px}
.ori{font-size:15px;transform:rotate(-45deg);margin:-8px 0 0 0}.orr{margin:4px 0 0 -10px}
.dec{position:relative}.dec span{font-size:13px;line-height:12px;text-align:right;width:25px}
.dec svg{position:absolute;fill:none;stroke:#1e88d8;stroke-width:1.800}.dl{left:6px;top:2px}.dr{left:7px;bottom:1px}
.lb{margin-left:6px;font-size:17px}
.big{display:flex;flex-direction:column;align-items:center;padding-top:5px;font-size:16.500px}
.big b{line-height:24px}
.big svg+b{margin-top:7px}
.bc{margin-top:7px}
.g-clip .paste{width:87px;padding:7px 0 0 10px}
.paste svg+b{margin-top:4px}
.g-edit .big{padding:5px 2px 0 0}
.g-edit .big svg+b{margin-top:4px}
.g-sens .big,.g-add .big,.g-ana .big{padding-top:6px}
.g-man .big,.g-pdf .big{padding-top:6px}
.dim{color:#b5b5b5}
.g-end{margin-left:auto;padding:125px 14px 0 0}

.fbar{height:57px;margin-top:0;display:flex;align-items:flex-start;padding:12px 12px 0;font-size:17.500px;flex:none}
.fb{height:35px;background:#fff;border:1px solid #cfd1d4;border-radius:6px;display:flex;align-items:center}
.name{width:152px;justify-content:space-between;padding:0 7px 0 6px}
.dots{margin:10px 13px 0}
.fx{width:128px;padding-left:9px}.fx svg+svg{margin-left:15px}.fx em{margin:-4px 0 0 15px;font:italic 400 28px/30px "Liberation Serif",serif;color:#333}.fx .gr{color:#999;margin-left:7px}
.val{width:1580px;margin-left:6px;padding:0 5px 3px 15px;justify-content:space-between}
.val span{margin-top:2px}

.sheet{height:603px;display:flex;flex:none}
.grid{width:1889px;height:603px;overflow:hidden;background:#fff;position:relative;display:flex;flex-direction:column}
.r{display:flex;flex:none}
.r>div{border-right:1px solid #000;border-bottom:1px solid #000;overflow:hidden;display:flex;white-space:nowrap;font:18.700px/24px Lato,"Noto Sans",sans-serif;color:#000;flex:none;padding-bottom:1px}
.r .n{width:40px;background:#f0f0f0;border-right:1px solid #a0a0a0;border-bottom:1px solid #dcdcdc;justify-content:center;align-items:flex-end;font:18px/24px "Noto Sans",sans-serif;color:#484848}
.r.sel .n{background:#e0e0e0;color:#217346;border-right:2px solid #217346;border-bottom-color:#b8b8b8}
.A{width:57px}.B{width:637px}.C{width:317px}.E{width:121px}.F{width:152px}.G{width:281px}.H{width:178px}.I{width:85px}.J{width:22px}
.r .A,.r .B,.r .C{justify-content:center;align-items:flex-start;padding-top:3px}
.r .C{border-right-color:#969696}
.r .E{justify-content:flex-end;align-items:flex-end}
.r .F,.r .G,.r .H{align-items:flex-end;padding-left:3px}
.r .I,.r .J,.r.e>div:not(.n){border-color:#e0e0e0}
.r .J{border-right:0}
.r.e .C{border-right-color:#969696}
.deep .n,.deep .E,.deep .F,.deep .G,.deep .H{padding-bottom:3px}
.r.low .A,.r.low .B,.r.low .C{align-items:flex-end;padding:0 0 1px}
.r.mid .E{align-items:center;padding-bottom:0}
.r.top .E,.r.top .F,.r.top .G{align-items:flex-start;padding-top:3px}
.r.top .H{align-items:flex-start;padding-top:4px}
.r.hdr>div{height:29px;border-right:1px solid #d0d0d0;border-bottom:1px solid #a0a0a0;background:#f0f0f0;color:#484848;justify-content:center;align-items:center;font:17px/24px "Noto Sans",sans-serif;padding:2px 0 0}
.r.hdr .C{border-right-color:#969696}
.r.hdr .E{padding-right:65px}
.r.hdr .H{background:#e0e0e0;color:#217346;border-bottom:2px solid #217346}
.tri{width:22px;height:20px;background:linear-gradient(to bottom right,transparent 50%,#dcdcdc 50%);margin-left:12px}
.r.head>div:not(.n):not(.I):not(.J){background:#001f5f;color:#fff;font-weight:700;justify-content:center;border-bottom-color:#969696;padding-left:0}
.r.head>.I,.r.head>.J{border-bottom-color:#969696}
.r.head .n{border-bottom-color:#969696}
.r.head .E{justify-content:flex-end!important}
.grn .A,.grn .B,.grn .C,.grn .E,.grn .F,.grn .G,.grn .H{background:#548235;color:#fff}
.navy .G,.navy .H{background:#203764;color:#fff}
.r.navy .G{justify-content:center;padding-left:1px}.r.navy .H{padding-left:0}
.r.sel .H{background:#0a0a0a;color:#c9c9c9;border-color:#000}
.r.sel.mid .H{background:#0f0f0f;color:#fff}
.lite{color:#dcdcdc}
.ul{text-decoration:underline;text-underline-offset:2px;text-decoration-thickness:1px}
.frame{position:absolute;left:1603px;top:149px;width:181px;height:413px;border:2px solid #217346;box-shadow:inset 0 0 0 1px #fff}
.frame::after{content:"";position:absolute;right:-4px;bottom:-4px;width:7px;height:7px;background:#217346;border:solid #fff;border-width:1px 0 0 1px}
.vs{width:25px;height:605px;margin-left:3px;background:#f4f4f4;border-radius:13px;display:flex;flex-direction:column;align-items:center;padding:8px 0 8px;fill:#666}
.vs i{width:12px;height:149px;border-radius:6px;background:#707070;margin:261px 0 auto}

.sheets{height:49px;flex:none;display:flex;align-items:center;font-size:18.500px;border-bottom:1px solid #f4f4f4;border-top:1px solid #d8dadf}
.sheets>span{height:49px;display:flex;align-items:center;flex:none;position:relative}
.sheets>span::after{content:"";position:absolute;right:0;top:10px;height:28px;width:1px;background:#c9cbd0}
.s-l{margin:-4px 0 0 35px}.s-r{margin:-4px 0 0 40px}
.s1{width:134px;margin-left:87px}.s1+span::after{display:none}
.s1::after{right:-1px!important}
.sheets>.s2{width:175px;height:43px;margin:-7px 0 0 7px;background:#fff;border-radius:0 0 8px 8px;padding:0 12px;font-weight:700;font-size:18px}
.s2 b{font-weight:700;box-shadow:0 3px 0 #107c41;line-height:29px;margin-top:-2px}
.sheets .s3{width:98px;padding-left:26px}
.sheets .s4{width:187px;padding-left:19px}
.sheets .s5{width:230px;padding-left:20px}
.sheets .s6{width:26px;padding-left:18px;overflow:hidden}.s6::after{display:none}
.s-m{margin:-4px 0 0 14px}.s-p{margin:-4px 0 0 30px}.s-d{margin:-2px 0 0 38px}
.hs{margin:-3px 0 0 22px;width:708px;height:26px;border-radius:13px;background:#f4f4f4;display:flex;align-items:center;padding:0 7px;fill:#666}
.hs i{width:292px;height:12px;border-radius:6px;background:#707070;margin:0 auto 0 256px}

.status{height:32px;flex:none;background:#f4f4f4;display:flex;align-items:center;font-size:14.500px}
.st1{margin-left:16px}.st2{margin-left:28px}.st3{margin-left:4px;font-weight:600}.st4{margin-left:auto;margin-right:27px}
.v{width:60px;height:32px;display:flex;align-items:center;justify-content:center}.v.on{background:#e0e0e0}
.zoom{margin-left:8px}.st5{margin:0 11px 0 20px}

.task{height:72px;border-top:2px solid #41454c;background:linear-gradient(90deg,#202022 0,#202124 18%,#1b2230 32%,#1b2230 80%,#1f2226 90%,#202124 100%);display:flex;align-items:center;color:#fff;font-size:17px;flex:none}
.win{margin-left:104px}
.ts{width:326px;height:44px;border-radius:22px;background:#f2f2f2;margin-left:22px;display:flex;align-items:center;padding:0 0 1px 16px;gap:15px;color:#555;font-size:18px}
.apps{display:flex;margin-left:5px;height:70px}
.apps span{width:66px;height:70px;display:flex;align-items:center;justify-content:center;position:relative}
.apps svg{width:36px;height:36px;z-index:1}
.apps span::after{content:"";position:absolute;bottom:7px;width:9px;height:5px;border-radius:3px;background:#9a9ca1;z-index:1}
.apps .nodot::after{display:none}
.apps .act::before,.apps .any::before{content:"";position:absolute;left:4px;top:4px;width:59px;height:60px;border-radius:7px;background:#2b323d;border:1px solid #3a414b;box-shadow:inset -5px 0 0 #242b36}
.apps .any::before{background:#82454b;border-color:#9c5158;box-shadow:inset -6px 0 0 #6d3b43}
.apps .act::after{width:24px;background:#4cc2ff}.apps .any::after{width:36px;background:#4cc2ff}
.badge{position:absolute;z-index:2;left:34px;top:9px;width:24px;height:24px;border-radius:50%;background:#c42b1c;font:normal 16px/24px "Noto Sans",sans-serif;text-align:center}
.tr1{margin-left:103px}.tr2{margin-left:26px}
.lang{margin:-2px 0 0 27px;width:36px;display:flex;flex-direction:column;align-items:center;line-height:23px}
.tr3{margin-left:26px}.tr4{margin-left:11px}.tr5{margin-left:13px}
.clock{margin:-2px 29px 0 auto;display:flex;flex-direction:column;align-items:flex-end;line-height:24px}
```
FILE: app.js
```
// Column order; each cell is "text|width in px".
const cols = ['A', 'B', 'C', 'E', 'F', 'G', 'H', 'I', 'J'];
const bo = 'Lidha Didha Application Server - Backoffice|389';
const bd = 'Lidha Didha Database Server - Backoffice|372';
const pr = 'Production|100';
const cu = 'cloudusr|79';
// [row number, height, classes, cells, right inset of the hostname]
const rows = [
  [1, 29, 'head low', ['Sr No|49', 'Application Names|173', 'Zones|55', 'hostname|92', 'New IP Address|143', 'Sudo User|93', 'Password|88'], 28],
  [32, 32, 'grn low', ['21|21', 'PAT|34', 'App|36', 'VALAPP03|87', '100.70.36.69|117', 'PATADMIN|101', ''], 40],
  [33, 32, 'grn low', ['23|21', 'PAT|34', 'DB|26', 'VALDBP02|90', '100.70.35.198|128', 'PATADMIN|101', ''], 38],
  [34, 29, 'grn low navy', ['', 'Datalake|79', '', '', '100.92.90.52|117', cu, 'QWE#20asd28907$|177'], 0],
  [35, 87, 'sel deep mid', ['24|21', 'Kambala Web, Application & Database Server - Frontoffice (Primary)|621', 'APP & DB-UAT|132', 'NORAPQ13|102', '100.70.36.41|117', cu, 'CL0uDuSr765#7|142'], 16],
  [36, 32, 'sel deep', ['25|21', bo, 'APP-UAT (Windows 20.22)|240', 'MLDHAPQ12|112', '100.92.90.60|117', cu, 'QWE#20asd28907$|174'], 18],
  [37, 32, 'sel deep', ['26|21', bd, 'DB-UAT (RHEL 9.4)|169', 'MLDHDBQ09|113', '100.92.90.53|117', cu, 'PqLaMNBz#!1001|157'], 17],
  [38, 29, 'sel', ['27|21', bo, 'Production(Windows20.22)|249', 'MLDHAPP17|109', '100.92.90.57|117', cu, 'arr0TadM1n@132|167|u'], 20],
  [39, 29, 'sel', ['28|21', bd, 'Production(RHEL9.4)|187', 'MLDHDBP10|111', '100.92.90.55|117', cu, 'Admin@#$54321|157|l'], 19],
  [40, 32, 'sel deep', ['29|21', 'IML Auction Application Server|280', 'UAT|37', 'MIMLAPQ14|112', '100.70.36.42|117', 'eagle|48', 'PqLaMNBz#!1001|157'], 19],
  [41, 32, 'sel deep', ['30|21', 'IML Auction Application Server|280', pr, 'MIMLAPP14|107', '100.94.40.36|117', 'clouduser|90', 'Cl0udU3er@1324|157'], 21],
  [42, 47, 'sel top', ['31|21', 'Kambala Web Server - Frontoffice (Primary)|397', pr, 'NORWBP15|105', '100.70.36.77|117', cu, 'dW>;cV2k4z|112'], 14],
  [43, 29, 'sel', ['32|21', 'Kambala Web Server - Frontoffice (Secondary)|421', pr, 'NORWBP16|105', '100.70.36.78|117', cu, 'Sanjivani@123|134|u'], 14],
  [44, 32, 'sel deep', ['33|21', 'Kambala Application & Database Server - Frontoffice (Primary)|568', pr, 'NNORDBP08|114', '100.94.40.34|117', cu, 'dW>;cV2k4z|112'], 17],
  [45, 29, 'sel', ['34|21', 'Kambala Application & Database Server - Frontoffice (Secondary)|592', pr, 'NNORDBP09|114', '100.94.40.35|117', cu, 'Cl0udU3er@1324|161|u'], 17],
  [46, 29, 'e', [], 0],
  [47, 29, 'e', [], 0],
];
const esc = s => s.replace(/&/g, '&amp;').replace(/>/g, '&gt;');
const cell = (c, i, inset) => {
  const [t, w, f] = (c || '').split('|');
  const pad = cols[i] === 'E' && inset ? ` style="padding-right:${inset}px"` : '';
  const cls = f === 'u' ? ' class="ul lite"' : f === 'l' ? ' class="lite"' : '';
  return `<div class="${cols[i]}"${pad}>${t ? `<span${cls} data-w="${w}">${esc(t)}</span>` : ''}</div>`;
};
let html = '<div class="r hdr"><div class="n"><span class="tri"></span></div>' +
  cols.map(c => `<div class="${c}">${c === 'J' ? '' : c}</div>`).join('') + '</div>';
for (const [n, h, cls, cells, inset] of rows) {
  html += `<div class="r ${cls}" style="height:${h}px"><div class="n">${n}</div>` +
    cols.map((_, i) => cell(cells[i], i, inset)).join('') + '</div>';
}
document.getElementById('grid').innerHTML = html + '<div class="frame"></div>';

// Track each label to its design width.
for (const el of document.querySelectorAll('[data-w]')) {
  const range = document.createRange();
  range.selectNodeContents(el);
  const n = el.textContent.length;
  const d = (+el.dataset.w - range.getBoundingClientRect().width) / n;
  el.style.letterSpacing = d.toFixed(3) + 'px';
}
```
